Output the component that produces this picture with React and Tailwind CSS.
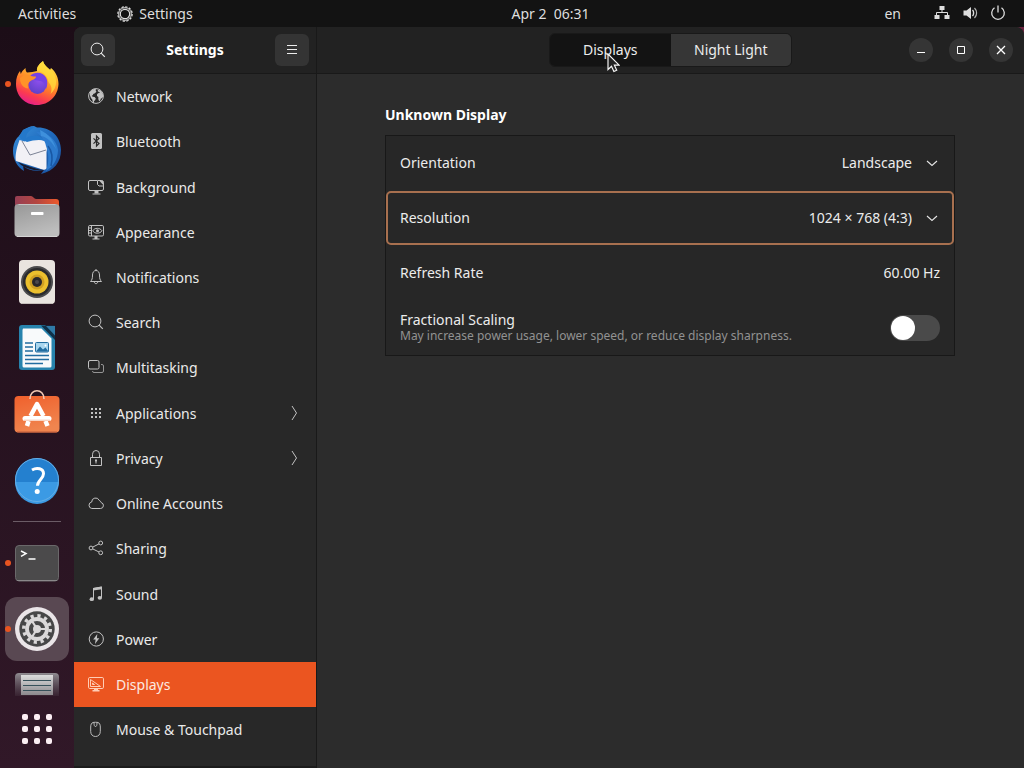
import React, { useState } from 'react';

/* ---------- symbolic icons ---------- */

function Sym({ children, className = 'size-4' }) {
  return (
    <svg viewBox="0 0 16 16" className={`${className} shrink-0`} fill="none" stroke="currentColor" strokeWidth="1" aria-hidden="true">
      {children}
    </svg>
  );
}

const SearchIcon = () => (
  <Sym>
    <circle cx="7" cy="7" r="5.9" />
    <path d="M11.2 11.2 14.8 14.8" strokeWidth="1.2" />
  </Sym>
);

const symbols = {
  network: (
    <Sym>
      <circle cx="8" cy="8" r="7.4" />
      <path
        d="M1.6 4.600 3.500 2.200 6.500.8l1.800.6-.7 1.400.9.700-1.500 1.800-1.800.6-.3 1.400-1.200.200.900 1.200 2 .2 1.200 1.600-.7 1.700-1 .9-.3 2.200-1-.6-.4-3-1.400-1.800L2 7.500Z"
        fill="currentColor"
        stroke="none"
      />
      <path d="M9.800 1.800 12.500 2.600l2.400 3.200.2 2.700-1.200 1.700-1 .4-.8 2.200-1 .4-.8-2.300.1-1.800-1.400-1.100.1-2 1.500-1 1.300.1-.7-1-1.400-.5Z" fill="currentColor" stroke="none" />
    </Sym>
  ),
  bluetooth: (
    <Sym>
      <rect x="3" y="0" width="11" height="16" rx="1.500" fill="currentColor" stroke="none" />
      <path d="m5.500 5.400 5.500 5.100L8.500 13V3l2.500 2.500-5.500 5.100" stroke="#282828" strokeWidth="1.200" />
    </Sym>
  ),
  background: (
    <Sym>
      <path d="M9 1.500H2A1.500 1.500 0 0 0 .5 3v7A1.500 1.500 0 0 0 2 11.500h12a1.500 1.500 0 0 0 1.500-1.500V7M4.500 15h8" />
      <path d="M9.500 1.500h4a2 2 0 0 1 2 2v3.500H11l-1.500-1.500Z" />
      <path d="m11 1.500 4.500 4.800V3.500a2 2 0 0 0-2-2Z" fill="currentColor" stroke="none" />
      <path d="M6.500 12h4v2.500h-4Z" fill="currentColor" stroke="none" />
    </Sym>
  ),
  appearance: (
    <Sym>
      <rect x=".5" y="1.500" width="15" height="10.500" rx="1.300" />
      <path d="M3.500 1.500V12M1 4h2.500M1 6.500h2.500M1 9h2.500M4.500 15h7" />
      <path d="M6.500 12h3v3h-3Z" fill="currentColor" stroke="none" />
      <path d="M4.800 6.800C6.500 3.500 12 3.500 14 6.800 12 10 6.500 10 4.800 6.800Z" />
      <circle cx="9.500" cy="6.700" r="1.500" fill="currentColor" stroke="none" />
    </Sym>
  ),
  notifications: (
    <Sym>
      <path d="M2.500 12.500h11c-1.500-1.500-2-3-2-6.500C11.500 3.500 10.200 1.500 8 1.500S4.500 3.500 4.500 6c0 3.500-.5 5-2 6.500Z" strokeLinejoin="round" />
      <path d="M8 0v1.500M6.300 13c.2 2.200 3.200 2.200 3.400 0" />
    </Sym>
  ),
  search: <SearchIcon />,
  multitasking: (
    <Sym>
      <rect x=".5" y="1.500" width="10.500" height="8.500" rx="1.500" />
      <path d="M13 5.500h1a1.500 1.500 0 0 1 1.500 1.500v5a1.500 1.500 0 0 1-1.500 1.500H6A1.500 1.500 0 0 1 4.500 12" opacity=".7" />
    </Sym>
  ),
  applications: (
    <Sym>
      <path
        d="M3 3h2v2H3ZM7 3h2v2H7ZM11 3h2v2h-2ZM3 7h2v2H3ZM7 7h2v2H7ZM11 7h2v2h-2ZM3 11h2v2H3ZM7 11h2v2H7ZM11 11h2v2h-2Z"
        fill="currentColor"
        stroke="none"
      />
    </Sym>
  ),
  privacy: (
    <Sym>
      <path d="M2.500 7.500h11v8h-11ZM4.500 7.500V4.300a3.500 3.800 0 0 1 7 0v3.200" />
      <path d="M7 9.500h2v1.700l-.5.300v2h-1v-2l-.5-.3Z" fill="currentColor" stroke="none" />
    </Sym>
  ),
  cloud: (
    <Sym>
      <path d="M3.800 13.500h8.700a3 3 0 0 0 .7-5.900 3.500 3.500 0 0 0-2-2.200A3.900 3.900 0 0 0 3.700 7a3.300 3.300 0 0 0 .1 6.500Z" />
    </Sym>
  ),
  sharing: (
    <Sym>
      <circle cx="3" cy="8" r="1.900" />
      <circle cx="12.700" cy="3" r="1.900" />
      <circle cx="12.700" cy="12.800" r="1.900" />
      <path d="m4.700 7.100 6.300-3.200M4.700 8.900l6.300 3.100" />
    </Sym>
  ),
  sound: (
    <Sym>
      <path d="M5.500 13V2.500L13.500 1v10.500" />
      <path d="M5 2l9-1.500v2.700L5 4.500Z" fill="currentColor" stroke="none" />
      <ellipse cx="3.800" cy="13.200" rx="2.200" ry="1.900" fill="currentColor" stroke="none" />
      <ellipse cx="11.800" cy="11.800" rx="2.200" ry="1.900" fill="currentColor" stroke="none" />
    </Sym>
  ),
  power: (
    <Sym>
      <circle cx="8.300" cy="8" r="7.100" />
      <path d="M9.300 3 5.200 8.600h2.400L7 13l4.300-5.700H8.900Z" fill="currentColor" stroke="none" />
    </Sym>
  ),
  displays: (
    <Sym>
      <rect x=".5" y="1.500" width="15" height="11" rx="1.300" />
      <path d="M2.500 3.500 12.500 10.500H2.500ZM4.500 7v1.500h2Z" />
      <path d="M6 12.500h4V14h1.500v1.500h-7V14H6Z" fill="currentColor" stroke="none" />
    </Sym>
  ),
  mouse: (
    <Sym>
      <path d="M5 1.500c-1.500.5-2.300 2-2.300 4.500v4.500c0 3 2 5 4.800 5s4.800-2 4.800-5V6c0-2.500-.8-4-2.300-4.500-1-.3-4-.3-5 0ZM6 1.500c0 3 .5 4 1.500 4s1.500-1 1.500-4" opacity=".95" />
    </Sym>
  ),
};

const ChevronDown = () => (
  <svg viewBox="0 0 12 12" className="size-3 shrink-0" fill="none" stroke="#e4e4e4" strokeWidth="1.100" aria-hidden="true">
    <path d="m1 4 5 4.500L11 4" />
  </svg>
);

/* ---------- dock artwork, each on a 64x64 tile ---------- */

function Tile({ children }) {
  return (
    <svg viewBox="0 0 64 64" className="size-16" aria-hidden="true">
      {children}
    </svg>
  );
}

const art = {
  firefox: (
    <Tile>
      <defs>
        <linearGradient id="ffBody" x1=".75" y1=".05" x2=".35" y2="1">
          <stop offset="0" stopColor="#ffe94a" />
          <stop offset=".3" stopColor="#ffb02c" />
          <stop offset=".55" stopColor="#ff7a2a" />
          <stop offset=".8" stopColor="#fb3b50" />
          <stop offset="1" stopColor="#e5208a" />
        </linearGradient>
        <radialGradient id="ffGlobe" cx=".6" cy=".2" r=".9">
          <stop offset="0" stopColor="#9150f0" />
          <stop offset="1" stopColor="#5b3fc4" />
        </radialGradient>
      </defs>
      <path
        d="M38 9c1 4 4 6 7 9l1-2c5 4 7.500 10 7.500 16C53 44 44 53 32 53S11 44 11 32c0-6 1.500-10 4-13l.8 3c1-2.500 2.500-4 4.700-6 0 2 .5 3.500 1.500 4.500 4-.5 7-.5 10-1.500-.5-4 2-7 6-10Z"
        fill="url(#ffBody)"
      />
      <circle cx="32.500" cy="33" r="9" fill="url(#ffGlobe)" />
      <path d="M25 24c5-5 13-4 16 1.500C43 29 42.500 34 41 37c0-5-3-8-6-8l-5-1Z" fill="#7542e5" />
      <path d="M15 26c3-3 6-4 9-3 2 1 4 1.500 7 1.500 0 3-4 3-6 5-2 1.500-3 3-1.500 7C18 36 15 32 15 26Z" fill="#ff9328" />
      <path d="M38 9c-5 4-6.500 7-5.500 10 6 1 10 5 11 11 3 4 4 7 2 12 8-7 7-18 0-24-3-3-6.500-5-7.500-9Z" fill="#ffdc3c" opacity=".75" />
    </Tile>
  ),
  thunderbird: (
    <Tile>
      <defs>
        <linearGradient id="tbBody" x1="0" y1="0" x2="1" y2="1">
          <stop offset="0" stopColor="#3a93df" />
          <stop offset=".5" stopColor="#1f68ba" />
          <stop offset="1" stopColor="#1a4f9c" />
        </linearGradient>
      </defs>
      <path d="M18 12c4-2 7-4 11-4l3 1.500C46 9 56 19 56 32c0 12-7 21-20 24l3-4c-9 2-16 0-21-4l1 5C12 49 8 41 8 33c0-5 1-9 4-13l4-4Z" fill="url(#tbBody)" />
      <path d="m14.500 22 5 1.500c6-3 15-3 21 0l2 3-1 8v16c-2 2-4 1-7 0L11 43c-1-3 0-10 1.500-15Z" fill="#f2f1f6" />
      <path d="m17 23 8 14 16-5" fill="none" stroke="#7c8396" strokeWidth="1" />
      <path d="M13 44c7 3 17 7 25 8-8 1-16-1-22-5Z" fill="#171a2e" />
      <path d="M18 12c5-2 8-4 12-3-6 3-9 7-9 11 9-4 15-2 20 3-6-2-13-1-19 1l-6-3-2-3Z" fill="#2478ca" />
      <path d="M31 14c11-1 21 8 22 18 0 9-5 17-12 21 3-9 3-17 0-25-1-6-5-10-10-14Z" fill="#2d7bce" />
      <path d="M35 12c9 4 14 11 16 19-4-7-9-12-15-13Z" fill="#3e90dc" />
      <path d="M43 28c4 5 5 12 3 20" fill="none" stroke="#1857a4" strokeWidth="1.500" />
    </Tile>
  ),
  files: (
    <Tile>
      <defs>
        <linearGradient id="fTab">
          <stop offset="0" stopColor="#963f54" />
          <stop offset=".5" stopColor="#b54640" />
          <stop offset="1" stopColor="#ed5a2c" />
        </linearGradient>
        <linearGradient id="fBody" x1="0" y1="0" x2=".4" y2="1">
          <stop offset="0" stopColor="#979797" />
          <stop offset="1" stopColor="#bdbdbd" />
        </linearGradient>
      </defs>
      <path d="M10 14a2 2 0 0 1 2-2h14c2 0 3 3 5 3h20a3 3 0 0 1 3 3v12H10Z" fill="url(#fTab)" />
      <rect x="9.500" y="20" width="45" height="33" rx="4" fill="url(#fBody)" />
      <path d="M13.500 20.500h37" stroke="#c5c3c3" />
      <path d="M12 52.500h40" stroke="#d5d5d5" strokeWidth="1" />
      <rect x="26" y="28" width="12.500" height="3" rx=".8" fill="#fff" />
    </Tile>
  ),
  music: (
    <Tile>
      <rect x="14" y="10" width="36" height="44" rx="4" fill="#e9e4df" />
      <path d="M16 53.500h32" stroke="#c6bfbb" />
      <circle cx="32" cy="32" r="16" fill="#4b4b4d" />
      <circle cx="32" cy="32" r="14" fill="#2b2b2d" />
      <circle cx="32" cy="32" r="11.500" fill="#ecc02e" />
      <circle cx="32" cy="32" r="7.500" fill="#cf9f22" />
      <circle cx="32" cy="32" r="5" fill="#29272b" />
      <circle cx="32" cy="32" r="2" fill="#4b474c" />
    </Tile>
  ),
  writer: (
    <Tile>
      <path d="M17 9h23l10 10v32a3 3 0 0 1-3 3H17a3 3 0 0 1-3-3V12a3 3 0 0 1 3-3Z" fill="#2783ad" />
      <path d="M18 12.500h18.500l10 10V50a1.500 1.500 0 0 1-1.500 1.500H19A1.500 1.500 0 0 1 17.500 50V14Z" fill="#f8fafb" />
      <path d="M36 9.500 50 24V10.500q0-1-1-1Z" fill="#103048" />
      <path d="M41 10h9v9.500Z" fill="#2f7aa7" />
      <path d="M20 27h8M20 31h8M20 35h8M20 39.500h24M20 43.500h24M20 47.500h18" stroke="#226da0" strokeWidth="1.600" />
      <rect x="30.500" y="26.500" width="13" height="9.500" rx="1" fill="#a9d6ee" stroke="#226da0" />
      <path d="m31 35.500 4-5 3 3 2.500-2 3 4Z" fill="#226da0" />
      <circle cx="40.500" cy="29.500" r="1" fill="#fff" />
    </Tile>
  ),
  software: (
    <Tile>
      <defs>
        <linearGradient id="sw" x1="0" y1="0" x2=".3" y2="1">
          <stop offset="0" stopColor="#f0602c" />
          <stop offset="1" stopColor="#f0854f" />
        </linearGradient>
      </defs>
      <rect x="9.500" y="14" width="45" height="36.500" rx="4" fill="url(#sw)" />
      <path d="M12 50h40" stroke="#bd5b3a" />
      <path d="M25 17c0-11 14-11 14 0" fill="none" stroke="#f2c9b4" strokeWidth="1.600" />
      <g stroke="#fff" fill="none" strokeLinecap="round">
        <path d="M20 36.500h24" strokeWidth="5" />
        <path d="m25.500 34 6.500-12 6.500 12" strokeWidth="4.500" strokeLinecap="butt" strokeLinejoin="round" />
        <path d="m23.500 39-1.500 5M40.500 39l2 5" strokeWidth="4.500" strokeLinecap="butt" />
      </g>
      <path d="M19 38.200h26" stroke="#f2b496" strokeWidth=".8" />
    </Tile>
  ),
  help: (
    <Tile>
      <circle cx="32" cy="32" r="22" fill="#2480cf" />
      <path d="M10 34h44A22 22 0 0 1 10 34Z" fill="#3b9ae4" />
      <circle cx="32" cy="32" r="21.500" fill="none" stroke="#65aee5" strokeWidth="1" />
      <path d="M27 22c5-3 11.500-1.500 11.500 3.800 0 5-6 6.500-6 12" fill="none" stroke="#fff" strokeWidth="3" />
      <circle cx="32.200" cy="43.500" r="2.500" fill="#fff" />
    </Tile>
  ),
  terminal: (
    <Tile>
      <rect x="10.500" y="14.500" width="43" height="35.500" rx="3.500" fill="#4b4a4b" stroke="#6a686a" />
      <path d="M12 49.500h40" stroke="#8a888a" />
      <path d="m16 20 5 2.600-5 2.700M23.500 28h7" fill="none" stroke="#fff" strokeWidth="1.500" />
    </Tile>
  ),
  settings: (
    <Tile>
      <circle cx="32" cy="32" r="22" fill="#eae5e8" />
      <circle cx="32" cy="32" r="17.700" fill="#474748" />
      <circle cx="32" cy="32" r="13.300" fill="none" stroke="#dad8d9" strokeWidth="3.400" strokeDasharray="3.200 3.764" />
      <circle cx="32" cy="32" r="10" fill="none" stroke="#dad8d9" strokeWidth="3.800" />
      <circle cx="32" cy="32" r="4" fill="#dad8d9" />
      <path d="M32 32h9M32 32l-5-8M32 32l-5 8" stroke="#dad8d9" strokeWidth="2.200" />
    </Tile>
  ),
  disks: (
    <svg viewBox="0 0 64 34" className="h-[34px] w-16" aria-hidden="true">
      <defs>
        <linearGradient id="disk" x1="0" y1="0" x2="0" y2="1">
          <stop offset="0" stopColor="#8f8b90" />
          <stop offset="1" stopColor="#6d656e" stopOpacity=".15" />
        </linearGradient>
        <linearGradient id="plate" x1="0" y1="0" x2="0" y2="1">
          <stop offset="0" stopColor="#dcdcdc" />
          <stop offset="1" stopColor="#8c898d" />
        </linearGradient>
      </defs>
      <path d="M10 33V14q0-4 4-4h36q4 0 4 4v19Z" fill="url(#disk)" />
      <path d="M16 12h32v20H16Z" fill="url(#plate)" />
      <path d="M18 17.500h28M18 22.500h28M18 27.500h28" stroke="#37515a" strokeWidth="1.200" />
    </svg>
  ),
};

const pinned = [
  { name: 'Firefox', icon: art.firefox, running: true },
  { name: 'Thunderbird', icon: art.thunderbird },
  { name: 'Files', icon: art.files },
  { name: 'Rhythmbox', icon: art.music },
  { name: 'LibreOffice Writer', icon: art.writer },
  { name: 'Ubuntu Software', icon: art.software },
  { name: 'Help', icon: art.help },
];

const running = [
  { name: 'Terminal', icon: art.terminal, running: true },
  { name: 'Settings', icon: art.settings, running: true, active: true },
];

function DockButton({ app }) {
  return (
    <button type="button" aria-label={app.name} className={`relative size-16 rounded-xl ${app.active ? 'bg-[#594852]' : ''}`}>
      {app.running && <span className="absolute top-1/2 left-0 size-1.5 -translate-y-1/2 rounded-full bg-[#e95420]" />}
      {app.icon}
    </button>
  );
}

function Dock() {
  return (
    <nav aria-label="Dock" className="flex w-[74px] shrink-0 flex-col items-center gap-0.5 overflow-hidden bg-linear-to-b from-[#1c0d17] to-[#311828] pt-[25px]">
      {pinned.map((app) => (
        <DockButton key={app.name} app={app} />
      ))}
      <hr className="my-[7px] h-px w-12 border-0 bg-[#6b5c66]" />
      {running.map((app) => (
        <DockButton key={app.name} app={app} />
      ))}
      <button type="button" aria-label="Disks">
        {art.disks}
      </button>
      <button type="button" aria-label="Show Applications" className="mt-[11px] grid grid-cols-3 gap-1.5 p-1">
        {Array.from({ length: 9 }, (_, i) => (
          <span key={i} className="size-1.5 rounded-xs bg-[#fbeef3]" />
        ))}
      </button>
    </nav>
  );
}

/* ---------- top panel ---------- */

function TopBar() {
  return (
    <header className="flex h-[27px] shrink-0 items-center justify-between bg-[#131313] pr-[18px] pl-[18px] text-[#dedede]">
      <div className="flex items-center gap-[41px] pr-6">
        <button type="button">Activities</button>
        <button type="button" className="flex items-center gap-1.5">
          <Sym>
            <circle cx="8" cy="8" r="7.200" strokeWidth="1.200" strokeDasharray="2.300 1.470" />
            <circle cx="8" cy="8" r="6.300" strokeWidth="1" />
            <circle cx="8" cy="8" r="4.700" strokeWidth="1.200" />
          </Sym>
          Settings
        </button>
      </div>
      <button type="button" className="whitespace-pre">
        Apr 2  06:31
      </button>
      <div className="flex items-center">
        <button type="button" className="mr-[33px]">en</button>
        <button type="button" aria-label="System menu" className="flex items-center gap-3 pb-0.5">
          <Sym>
            <path d="M5.500 1h5v4h-5ZM.5 10h5v4h-5ZM10.500 10h5v4h-5Z" fill="currentColor" stroke="none" />
            <path d="M8 5v2.500M2.500 10V7.500h11V10" />
          </Sym>
          <Sym>
            <path d="M1.500 5.500h3L9 2v12l-4.500-3.500h-3Z" fill="currentColor" stroke="none" />
            <path d="M10.500 5c1.500 1.500 1.500 4.500 0 6" strokeWidth="1.400" />
            <path d="M12.500 3c2.800 2.800 2.800 7.200 0 10" opacity=".8" strokeWidth="1.200" />
          </Sym>
          <Sym>
            <path d="M4.500 2.800a6.300 6.300 0 1 0 7 0M8 .5v7" strokeWidth="1.300" />
          </Sym>
        </button>
      </div>
    </header>
  );
}

/* ---------- settings window ---------- */

const groups = [
  [
    ['Network', 'network'],
    ['Bluetooth', 'bluetooth'],
  ],
  [
    ['Background', 'background'],
    ['Appearance', 'appearance'],
    ['Notifications', 'notifications'],
    ['Search', 'search'],
    ['Multitasking', 'multitasking'],
  ],
  [
    ['Applications', 'applications', true],
    ['Privacy', 'privacy', true],
    ['Online Accounts', 'cloud'],
    ['Sharing', 'sharing'],
  ],
  [
    ['Sound', 'sound'],
    ['Power', 'power'],
    ['Displays', 'displays'],
    ['Mouse & Touchpad', 'mouse'],
  ],
];

function Sidebar() {
  const [current, setCurrent] = useState('Displays');
  return (
    <aside className="flex w-[243px] shrink-0 flex-col border-r border-[#191919] bg-[#282828]">
      <div className="flex h-[47px] items-center justify-between border-b border-[#191919] bg-[#222222] px-[7px]">
        <button type="button" aria-label="Search" className="grid h-8 w-[34px] place-items-center rounded-md bg-[#343434]">
          <SearchIcon />
        </button>
        <h1 className="font-bold text-white">Settings</h1>
        <button type="button" aria-label="Menu" className="grid h-8 w-[34px] place-items-center rounded-md bg-[#343434]">
          <Sym>
            <path d="M3 3.500h10M3 7.500h10M3 11.500h10" />
          </Sym>
        </button>
      </div>
      <nav aria-label="Settings" className="flex flex-1 flex-col gap-px">
        {groups.map((group) => (
          <ul key={group[0][0]}>
            {group.map(([name, icon, more]) => (
              <li key={name}>
                <button
                  type="button"
                  onClick={() => setCurrent(name)}
                  className={`flex h-[45px] w-full items-center gap-3 px-3.5 text-left ${
                    current === name ? 'bg-[#eb5520] text-[#fbe9e0]' : 'text-[#eaeaea]'
                  }`}
                >
                  <span className={`pb-0.5 ${current === name ? 'text-[#ffcdb6]' : 'text-[#c2c2c2]'}`}>{symbols[icon]}</span>
                  <span className="flex-1">{name}</span>
                  {more && (
                    <span className="pb-0.5">
                      <Sym>
                        <path d="m6 1 4.500 7L6 15" opacity=".8" />
                      </Sym>
                    </span>
                  )}
                </button>
              </li>
            ))}
          </ul>
        ))}
      </nav>
      <div className="h-0.5 bg-[#1c1c1c]" />
    </aside>
  );
}

function Pointer() {
  return (
    <svg viewBox="0 0 13 20" className="pointer-events-none absolute top-[19px] left-[57px] h-5 w-[13px]" aria-hidden="true">
      <path d="M1 1v15.500l3.500-3.300 2.400 5.300 2.800-1.200-2.300-5.100h4.800Z" fill="#222" stroke="#f4f4f4" strokeWidth="1.200" />
    </svg>
  );
}

function WindowButton({ label, children }) {
  return (
    <button type="button" aria-label={label} className="grid size-6 place-items-center rounded-full bg-[#353535] text-white">
      <Sym>{children}</Sym>
    </button>
  );
}

function SelectRow({ id, label, options, focused }) {
  return (
    <div className={`flex h-[54px] items-center justify-between border-2 px-3 ${focused ? 'rounded-[5px] border-[#a8704f]' : 'border-transparent'}`}>
      <label htmlFor={id}>{label}</label>
      <div className="flex items-center gap-3.5 pr-0.5">
        <select id={id} className="field-sizing-content appearance-none bg-transparent outline-none">
          {options.map((option) => (
            <option key={option} className="bg-[#272727]">
              {option}
            </option>
          ))}
        </select>
        <ChevronDown />
      </div>
    </div>
  );
}

function Content() {
  return (
    <section className="flex min-w-0 flex-1 flex-col bg-[#2c2c2c]">
      <div className="grid h-[47px] grid-cols-[1fr_auto_1fr] items-center border-b border-[#191919] bg-[#222222] px-[11px]">
        <div role="tablist" className="col-start-2 grid h-[34px] w-[243px] grid-cols-2 rounded-md border border-[#191919]">
          <button type="button" role="tab" aria-selected="true" className="relative rounded-l-[5px] bg-[#131313]">
            Displays
            <Pointer />
          </button>
          <button type="button" role="tab" aria-selected="false" className="rounded-r-[5px] bg-[#363636]">
            Night Light
          </button>
        </div>
        <div className="flex justify-end gap-4">
          <WindowButton label="Minimize">
            <path d="M4 10.500h8" />
          </WindowButton>
          <WindowButton label="Maximize">
            <path d="M4.500 4.500h7v7h-7Z" />
          </WindowButton>
          <WindowButton label="Close">
            <path d="m4 4 8 8M12 4l-8 8" strokeWidth="1.300" />
          </WindowButton>
        </div>
      </div>
      <main className="mx-auto w-full max-w-[571px] pt-[31px] pr-px">
        <h2 className="mb-2.5 font-bold text-white">Unknown Display</h2>
        <div className="flex flex-col gap-px border border-[#181818] bg-[#272727]">
          <SelectRow id="orientation" label="Orientation" options={['Landscape', 'Portrait Right', 'Portrait Left']} />
          <SelectRow id="resolution" label="Resolution" options={['1024 × 768 (4:3)', '800 × 600 (4:3)']} focused />
          <div className="flex h-[54px] items-center justify-between px-3.5">
            <span>Refresh Rate</span>
            <span>60.00 Hz</span>
          </div>
          <div className="flex h-[54px] items-center justify-between px-3.5">
            <label htmlFor="scaling" className="flex flex-col">
              <span className="leading-4">Fractional Scaling</span>
              <span className="text-xs leading-4 text-[#929292]">May increase power usage, lower speed, or reduce display sharpness.</span>
            </label>
            <input
              id="scaling"
              type="checkbox"
              role="switch"
              className="flex h-[26px] w-[50px] appearance-none items-center rounded-full bg-[#4a4a4a] px-px before:size-6 before:rounded-full before:bg-white checked:justify-end checked:bg-[#e95420]"
            />
          </div>
        </div>
      </main>
    </section>
  );
}

export default function App() {
  return (
    <div className="flex h-screen flex-col overflow-hidden bg-[#131313] font-['Noto_Sans',sans-serif] text-[14px] leading-5 text-[#ececec]">
      <TopBar />
      <div className="flex min-h-0 flex-1">
        <Dock />
        <div className="flex min-w-0 flex-1 bg-linear-to-r from-[#1c0d17] to-[#6b2340]">
          <div className="flex min-w-0 flex-1 overflow-hidden rounded-t-lg">
            <Sidebar />
            <Content />
          </div>
        </div>
      </div>
    </div>
  );
}
